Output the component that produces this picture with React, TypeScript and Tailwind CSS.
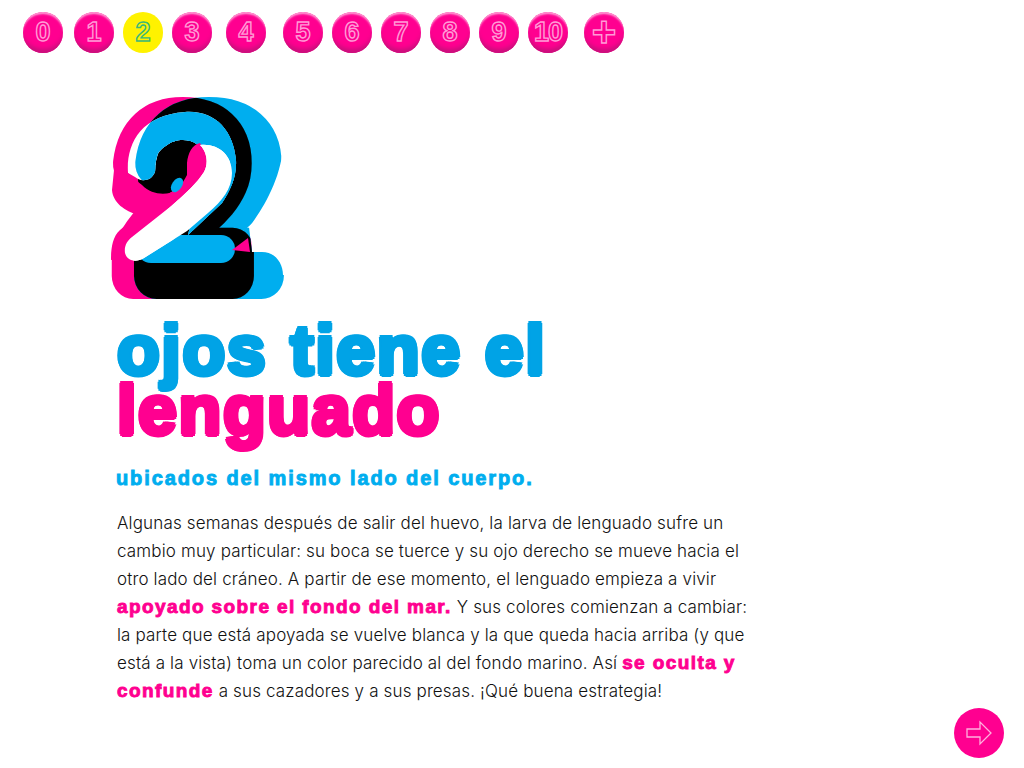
import React from "react";

const balls = [
  { label: "0", margin: "ml-0" },
  { label: "1", margin: "ml-[11px]" },
  { label: "2", margin: "ml-[9px]", active: true },
  { label: "3", margin: "ml-[9px]" },
  { label: "4", margin: "ml-[14px]" },
  { label: "5", margin: "ml-[17px]" },
  { label: "6", margin: "ml-[9px]" },
  { label: "7", margin: "ml-[9px]" },
  { label: "8", margin: "ml-[9px]" },
  { label: "9", margin: "ml-[9px]" },
  { label: "10", margin: "ml-[9px]" },
  { label: "+", margin: "ml-[16px]" },
];

const Two = ({ x, y, size, sx = 1, ...rest }: any) => (
  <text
    transform={`translate(${x} ${y}) scale(${sx} 1)`}
    fontSize={size}
    fontFamily="'Liberation Sans', sans-serif"
    fontWeight="700"
    strokeLinejoin="round"
    {...rest}
  >
    2
  </text>
);

const fatPink = { x: 26, y: 191, size: 222, sx: 0.93, strokeWidth: 46 };
const fatCyan = { x: 49, y: 191, size: 222, sx: 0.98, strokeWidth: 46 };

// the number is real text, the clip paths cut the inner colour zones out of it
const BigTwo = () => (
  <svg width="200" height="225" viewBox="0 0 200 225" className="block">
    <defs>
      <mask id="mFatPink" maskUnits="userSpaceOnUse" x="0" y="0" width="200" height="225">
        <Two {...fatPink} fill="#fff" stroke="#fff" />
      </mask>
      <clipPath id="cCyanShape">
        <path d="M0 0L200 0L200 60L183 60C182 90 165 122 149 142L152 167L162 167C175 167 183 178 183 190L200 190L200 225L0 225Z" />
      </clipPath>
      <clipPath id="cHole">
        <path d="M28 88C26 60 40 30 85 27C115 25 133 45 136 75C137 92 130 106 122 118L88 150L100 100L98 60C93 56 88 55 83 55C76 55 71 57 67 60C61 64 58 67 57 72C55 78 56 82 55 87C53 92 49 95 45 95C41 96 38 94 35 92Z" />
      </clipPath>
      <clipPath id="cWhite">
        <path d="M100 60C118 58 132 70 132 88C132 104 122 116 108 128L87 146L44 173C36 178 27 176 25 168C24 161 27 156 32 152L70 122C86 108 97 98 104 87C108 80 108 68 100 60Z" />
      </clipPath>
    </defs>
    <Two {...fatPink} fill="#ff0090" stroke="#ff0090" />
    <polygon points="150,141 170,120 170,167 152,167" fill="#fff" />
    <g clipPath="url(#cCyanShape)">
      <Two {...fatCyan} fill="#00aeef" stroke="#00aeef" />
      <g mask="url(#mFatPink)">
        <Two {...fatCyan} fill="#000" stroke="#000" />
      </g>
    </g>
    <ellipse cx="58" cy="95" rx="20" ry="16" fill="#000" />
    <g clipPath="url(#cHole)">
      <Two {...fatPink} fill="#fff" stroke="#fff" />
      <Two {...fatCyan} fill="#00aeef" stroke="#00aeef" />
    </g>
    <path
      d="M100 58C92 60 88 68 87 78L87 90C82 100 76 106 70 108C60 110 50 108 42 100L33 93L28 88L14 85L12 105C13 118 25 126 38 130L20 145C12 152 11 165 11 175L30 172L110 100L107 70Z"
      fill="#ff0090"
    />
    <rect x="37" y="150" width="98" height="28" rx="14" fill="#00aeef" />
    <ellipse cx="77" cy="100" rx="5" ry="8" transform="rotate(35 77 100)" fill="#00aeef" />
    <polygon points="132,165 148,153 150,167" fill="#ff0090" />
    <g clipPath="url(#cWhite)">
      <Two {...fatPink} fill="#fff" stroke="#fff" />
    </g>
  </svg>
);

const Strong = ({ children }: { children: React.ReactNode }) => (
  <span className="text-[#ff0090] font-['Liberation_Sans',sans-serif] font-bold text-[19px] tracking-[1.4px] [-webkit-text-stroke:0.9px_#ff0090]">
    {children}
  </span>
);

export default function App() {
  return (
    <div className="h-[768px] w-[1024px] bg-white flex flex-col overflow-hidden font-['Inter',sans-serif]">
      <nav className="flex pl-[23px] pt-[12px]">
        {balls.map((b) => (
          <button
            key={b.label}
            className={`${b.margin} w-10 h-[41px] rounded-full flex items-center justify-center font-['Liberation_Sans',sans-serif] font-bold text-transparent ${
              b.label === "+" ? "text-[42px] pb-[3px]" : b.label === "10" ? "text-[27px] tracking-[-1px]" : "text-[27px]"
            } ${
              b.active
                ? "bg-[#fff200] [-webkit-text-stroke:1.4px_#3cb878]"
                : "bg-[#ff0090] shadow-[inset_0_-7px_4px_-3px_#c9107c,inset_0_3px_2px_-1px_#ff9fd6] [-webkit-text-stroke:1.4px_#ff9bd6]"
            }`}
          >
            {b.label}
          </button>
        ))}
      </nav>

      <main className="flex-1 pl-[100px] pt-[32px]">
        <BigTwo />
        <h1 className="mt-[10px] ml-[17px] text-[70px] leading-[60px] font-['Liberation_Sans',sans-serif] font-bold tracking-[1.6px] [word-spacing:2px] [text-shadow:2.5px_0_currentColor,1.8px_1.8px_currentColor,0_2.5px_currentColor,-1.8px_1.8px_currentColor,-2.5px_0_currentColor,-1.8px_-1.8px_currentColor,0_-2.5px_currentColor,1.8px_-1.8px_currentColor]">
          <span className="block text-[#00a3e6]">ojos tiene el</span>
          <span className="block text-[#ff0090]">lenguado</span>
        </h1>
        <h2 className="ml-[16px] mt-[24px] text-[20px] leading-[28px] font-['Liberation_Sans',sans-serif] font-bold tracking-[1.9px] text-[#00aeef] [-webkit-text-stroke:0.9px_#00aeef]">
          ubicados del mismo lado del cuerpo.
        </h2>
        <p className="ml-[17px] mt-[17px] text-[17px] font-[350] tracking-[0.15px] leading-[28px] text-[#111] whitespace-nowrap">
          Algunas semanas después de salir del huevo, la larva de lenguado sufre un
          <br />
          cambio muy particular: su boca se tuerce y su ojo derecho se mueve hacia el
          <br />
          otro lado del cráneo. A partir de ese momento, el lenguado empieza a vivir
          <br />
          <Strong>apoyado sobre el fondo del mar.</Strong> Y sus colores comienzan a cambiar:
          <br />
          la parte que está apoyada se vuelve blanca y la que queda hacia arriba (y que
          <br />
          está a la vista) toma un color parecido al del fondo marino. Así <Strong>se oculta y</Strong>
          <br />
          <Strong>confunde</Strong> a sus cazadores y a sus presas. ¡Qué buena estrategia!
        </p>
      </main>

      <div className="flex justify-end pr-5 pb-[10px]">
        <button className="w-[50px] h-[50px] rounded-full bg-[#ff0090] flex items-center justify-center">
          <svg width="26" height="26" viewBox="0 0 26 26" fill="none" stroke="#ffb0de" strokeWidth="1.3">
            <path d="M1 9h13V2l11 11-11 11v-7H1z" />
          </svg>
        </button>
      </div>
    </div>
  );
}
